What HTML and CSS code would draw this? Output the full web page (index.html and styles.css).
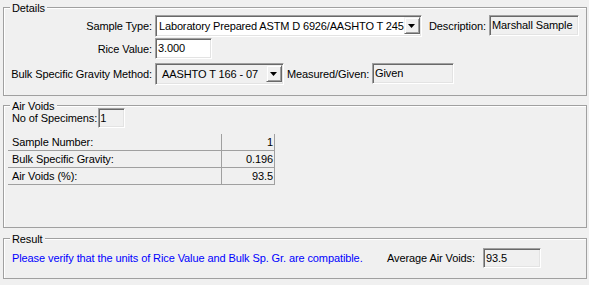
FILE: index.html
```html
<!DOCTYPE html>
<html>
<head>
  <meta charset="UTF-8">
  <title>Air Voids</title>
  <link rel="stylesheet" href="styles.css">
</head>
<body>
<div class="window">

  <div class="group details">
    <span class="group-title">Details</span>
    <div class="row">
      <span class="lbl">Sample Type:</span>
      <div class="combo combo-sample">
        <span class="combo-text">Laboratory Prepared ASTM D 6926/AASHTO T 245</span>
        <span class="drop"><svg width="8" height="4" viewBox="0 0 8 4"><path d="M0 0H7L3.5 4Z" fill="#000"/></svg></span>
      </div>
      <span class="lbl-inline desc-lbl">Description:</span>
      <div class="box readonly desc-box">Marshall Sample</div>
    </div>
    <div class="row row-rice">
      <span class="lbl">Rice Value:</span>
      <div class="box rice-box">3.000</div>
    </div>
    <div class="row row-bulk">
      <span class="lbl">Bulk Specific Gravity Method:</span>
      <div class="combo combo-bulk readonly">
        <span class="combo-text">AASHTO T 166 - 07</span>
        <span class="drop"><svg width="8" height="4" viewBox="0 0 8 4"><path d="M0 0H7L3.5 4Z" fill="#000"/></svg></span>
      </div>
      <span class="lbl-inline measured-lbl">Measured/Given:</span>
      <div class="box readonly measured-box">Given</div>
    </div>
  </div>

  <div class="group voids">
    <span class="group-title">Air Voids</span>
    <div class="spec-row">
      <span>No of Specimens:</span>
      <div class="box readonly spec-box">1</div>
    </div>
    <table class="grid">
      <tr><td class="name">Sample Number:</td><td class="val">1</td></tr>
      <tr><td class="name">Bulk Specific Gravity:</td><td class="val">0.196</td></tr>
      <tr><td class="name">Air Voids (%):</td><td class="val">93.5</td></tr>
    </table>
  </div>

  <div class="group result">
    <span class="group-title">Result</span>
    <div class="result-row">
      <span class="note">Please verify that the units of Rice Value and Bulk Sp. Gr. are compatible.</span>
      <span class="avg-lbl">Average Air Voids:</span>
      <div class="box readonly avg-box">93.5</div>
    </div>
  </div>

</div>
</body>
</html>
```

FILE: styles.css
```css
html, body {
  margin: 0;
  padding: 0;
  background: #f0f0f0;
}

body {
  font: 11px "Liberation Sans", Arial, sans-serif;
  letter-spacing: -0.1px;
  color: #000;
}

.window {
  padding: 7px 2px 0 3px;
}

/* group boxes */
.group {
  position: relative;
  border: 1px solid #a0a0a0;
  box-shadow: inset 1px 1px 0 #fff;
}
.group-title {
  position: absolute;
  top: -6px;
  left: 6px;
  padding: 0 2px;
  line-height: 13px;
  background: #f0f0f0;
}

.details {
  padding: 7px 0 11px;
}
.voids {
  margin-top: 9px;
  padding: 2px 0 0 4px;
  height: 119px;
}
.result {
  margin-top: 10px;
  padding: 9px 0 10px;
}

/* rows */
.row {
  display: flex;
  align-items: center;
  height: 21px;
}
.row-rice { margin-top: 2px; }
.row-bulk { margin-top: 4px; }

.lbl {
  width: 148px;
  margin-right: 3px;
  text-align: right;
  white-space: nowrap;
}
.lbl-inline {
  margin-right: 3px;
  white-space: nowrap;
}
.desc-lbl { margin-left: 7px; width: 57px; }
.measured-lbl { margin-left: 3px; width: 82px; }

/* edit boxes */
.box {
  box-sizing: border-box;
  height: 21px;
  line-height: 19px;
  padding: 0 2px;
  background: #fff;
  border: 1px solid;
  border-color: #a0a0a0 #fff #fff #a0a0a0;
  box-shadow: inset 1px 1px 0 #696969, inset -1px -1px 0 #e3e3e3;
  white-space: nowrap;
  overflow: hidden;
}
.readonly { background: #f0f0f0; }

.rice-box { width: 57px; }
.desc-box { width: 90px; }
.measured-box { width: 82px; }

/* combo boxes */
.combo {
  box-sizing: border-box;
  display: flex;
  align-items: center;
  height: 22px;
  background: #fff;
  border: 1px solid;
  border-color: #a0a0a0 #fff #fff #a0a0a0;
  box-shadow: inset 1px 1px 0 #696969, inset -1px -1px 0 #e3e3e3;
  padding: 2px 1px 2px 2px;
}
.combo.readonly { background: #f0f0f0; }
.combo-sample { width: 267px; }
.combo-bulk { width: 129px; }
.combo-text {
  flex: 1;
  overflow: hidden;
  white-space: nowrap;
  padding-left: 1px;
}
.combo-sample .combo-text { letter-spacing: -0.15px; }
.combo-bulk .combo-text { padding-left: 4px; }
.drop {
  box-sizing: border-box;
  flex: none;
  width: 16px;
  height: 17px;
  display: flex;
  align-items: center;
  justify-content: center;
  background: #f0f0f0;
  border: 1px solid;
  border-color: #f0f0f0 #696969 #696969 #f0f0f0;
  box-shadow: inset 1px 1px 0 #fff, inset -1px -1px 0 #a0a0a0;
}

/* air voids */
.spec-row {
  display: flex;
  align-items: center;
  padding-left: 4px;
}
.spec-box {
  width: 27px;
  height: 20px;
  line-height: 18px;
  margin-left: 1px;
  padding: 0 1px;
}

.grid {
  margin-top: 6px;
  border-collapse: collapse;
}
.grid td {
  height: 16px;
  padding: 0 1px 0 4px;
  border-bottom: 1px solid #a0a0a0;
  line-height: 16px;
}
.grid .name {
  width: 208px;
  border-right: 1px solid #a0a0a0;
}
.grid .val {
  width: 47px;
  text-align: right;
  border-right: 1px solid #a0a0a0;
}

/* result */
.result-row {
  display: flex;
  align-items: center;
  padding-left: 8px;
}
.note {
  width: 375px;
  color: #0000ff;
  white-space: nowrap;
}
.avg-lbl { width: 93px; margin-right: 3px; white-space: nowrap; }
.avg-box {
  width: 58px;
  height: 20px;
  line-height: 18px;
}
```
